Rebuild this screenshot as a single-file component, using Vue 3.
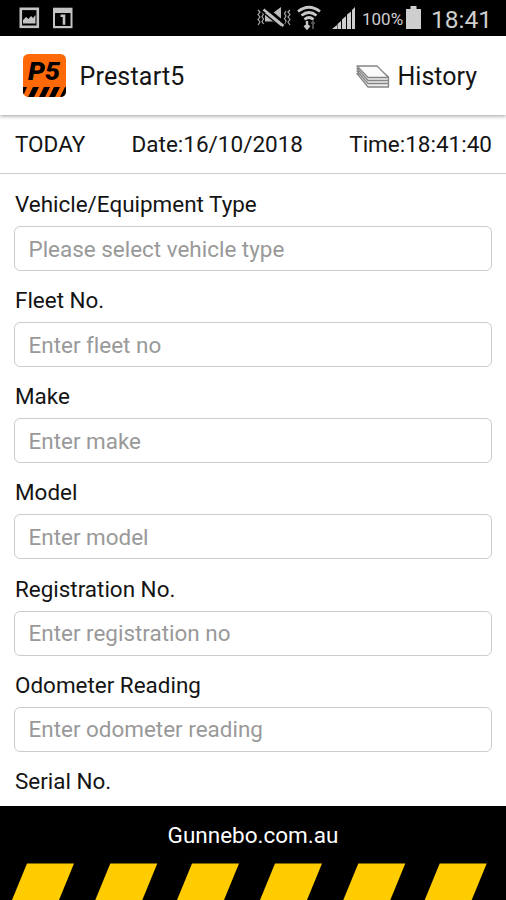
<script setup>
const fields = [
  { label: 'Vehicle/Equipment Type', hint: 'Please select vehicle type', id: 'type' },
  { label: 'Fleet No.', hint: 'Enter fleet no', id: 'fleet' },
  { label: 'Make', hint: 'Enter make', id: 'make' },
  { label: 'Model', hint: 'Enter model', id: 'model' },
  { label: 'Registration No.', hint: 'Enter registration no', id: 'rego' },
  { label: 'Odometer Reading', hint: 'Enter odometer reading', id: 'odo' },
]
const stripes = [27, 110.3, 192, 275, 358.3, 439.7]
</script>

<template>
  <div class="screen">
    <div class="status">
      <svg class="notices" width="54" height="22" viewBox="0 0 54 22">
        <rect x="1.8" y="1.8" width="17" height="18" fill="none" stroke="#c4c4c4" stroke-width="2.6" />
        <path d="M4 16.500V13l3-3 2.500 2 2.500-3 2 2 2.500-3v8.500z" fill="#c4c4c4" />
        <path d="M34 .7h19.500v20.500H34z" fill="#c4c4c4" />
        <path d="M36 6h15.500v13H36z" fill="#000" />
        <path d="M41.500 8.800h3.500v9" fill="none" stroke="#c4c4c4" stroke-width="2.600" />
      </svg>
      <div class="status-right">
        <svg class="mute" width="34" height="22" viewBox="0 0 34 22" fill="none" stroke="#a8a8a8">
          <path d="M1 3l2 2-2 2.500 2 2.500-2 2.500L3 15l-2 3M5 5l1.500 2L5 9.500 6.500 12 5 14.500 6.500 17M29 4l-1.500 2.500L29 9l-1.500 2.500L29 14l-1.500 3M33 3l-2 2 2 2.500-2 2.500 2 2.500-2 2.500 2 3" stroke-width="1.200" />
          <path d="M8 6h8l8-6v19.500l-8-5H8z" fill="#bcbcbc" stroke="none" />
          <path d="M9 1l18.500 15.500" stroke="#000" stroke-width="3" />
          <path d="M6.500 2.500l20 16.500" stroke="#c0c0c0" stroke-width="2.600" />
          <path d="M5 4.500l20 16.500" stroke="#000" stroke-width="1.400" />
        </svg>
        <svg class="wifi" width="24" height="26" viewBox="0 0 24 26" fill="none" stroke="#c8c8c8">
          <path d="M1 6.500Q12-2 23 6.500M4.500 10.500Q12 4.500 19.500 10.500M7.500 14.500q4.500-4 9 0" stroke-width="2.8" />
          <path d="M10 16v7M7.500 20.500l2.500 3 2.500-3" stroke-width="2.400" />
          <path d="M16 24v-7M14.500 19l1.500-2.500 1.500 2.500" stroke="#555" stroke-width="1.8" />
        </svg>
        <svg class="signal" width="24" height="23" viewBox="0 0 24 23" fill="#cecece">
          <path d="M0 22l5-4v4zM5.500 17l3.500-3v8H5.500zM10 12.500l4-3.500v13h-4zM15 7.500l4-3V22h-4zM20 3l3-3v22h-3z" />
        </svg>
        <span class="percent">100%</span>
        <svg class="battery" width="15" height="23" viewBox="0 0 15 23" fill="#cecece">
          <path d="M4.500 0h6v3H15v20H0V3h4.500z" />
        </svg>
        <span class="clock">18:41</span>
      </div>
    </div>

    <header class="header">
      <svg class="logo" width="43" height="43" viewBox="0 0 43 43">
        <clipPath id="logo-shape"><rect width="43" height="43" rx="5.500" /></clipPath>
        <g clip-path="url(#logo-shape)">
          <rect width="43" height="43" fill="#ff6908" />
          <text x="5" y="26" textLength="32" lengthAdjust="spacingAndGlyphs">P5</text>
          <path d="M0 33h4L1 40H0zM10 33h6L11 43H5zM21 33h6l-5 10h-6zM31 33h6l-5 10h-6zM42 33h1v10h-6z" fill="#000" />
        </g>
      </svg>
      <span class="brand">Prestart5</span>
      <div class="history">
        <svg width="34" height="23" viewBox="0 0 34 23" stroke="#858585" stroke-width="1.300" stroke-linejoin="round">
          <path d="M1 8.500l11 13.500h20.500V19L22 8.500z" fill="#eee" />
          <path d="M1 6l11 12.500h20.500V15.500L22 6z" fill="#eee" />
          <path d="M1 3.500L12 15.500h20.500V12L22 3.500z" fill="#eee" />
          <path d="M1 1L12 12.500h20.500L21 1z" fill="#fafafa" />
        </svg>
        <span class="history-text">History</span>
      </div>
    </header>

    <div class="moment">
      <span class="today">TODAY</span>
      <span class="date">Date:16/10/2018</span>
      <span class="time">Time:18:41:40</span>
    </div>

    <main class="form">
      <div v-for="f in fields" :key="f.id" class="field">
        <label :for="f.id" class="label">{{ f.label }}</label>
        <input :id="f.id" class="input" type="text" :placeholder="f.hint" />
      </div>
      <div class="label">Serial No.</div>
    </main>

    <footer class="footer">
      <div class="site">Gunnebo.com.au</div>
      <svg class="hazard" width="506" height="37" viewBox="0 0 506 37">
        <path v-for="x in stripes" :key="x" :d="`M${x} .5h47l-15 36.500h-47z`" fill="#fc0" />
      </svg>
    </footer>
  </div>
</template>

<style>
body {
  margin: 0;
  background: #fff;
}
</style>

<style scoped>
.screen {
  width: 506px;
  height: 900px;
  display: flex;
  flex-direction: column;
  overflow: hidden;
  background: #fff;
  color: #141414;
  font-family: Roboto, "Liberation Sans", sans-serif;
  font-variant-ligatures: none;
}
.screen > * {
  box-sizing: border-box;
  flex-shrink: 0;
}
.status {
  height: 35.500px;
  background: #000;
  display: flex;
  justify-content: space-between;
  padding: 7px 13px 0 19px;
}
.status-right {
  display: flex;
  align-items: flex-start;
  color: #cecece;
}
.wifi {
  margin: -2px 0 0 6px;
}
.signal {
  margin-left: 11px;
}
.percent {
  font-size: 17px;
  line-height: 24px;
  width: 41px;
  margin-left: 6px;
}
.battery {
  margin: -1px 0 0 3px;
}
.clock {
  font-size: 24.500px;
  line-height: 26px;
  margin-left: 10px;
  width: 62px;
  white-space: nowrap;
}
.header {
  height: 79.500px;
  display: flex;
  align-items: center;
  padding: 1px 29px 0 23px;
  background: #fff;
  box-shadow: 0 1px 4px rgba(0, 0, 0, 0.4);
  z-index: 1;
}
.logo text {
  font: italic 900 25px Roboto, sans-serif;
  fill: #000;
}
.brand {
  margin-left: 13.500px;
  padding-top: 1px;
  font-size: 25px;
  letter-spacing: 0.2px;
}
.history {
  margin-left: auto;
  display: flex;
  align-items: center;
  gap: 7px;
  padding-top: 1px;
  font-size: 25px;
}
.moment {
  height: 59px;
  border-bottom: 1px solid #ccc;
  display: flex;
  justify-content: space-between;
  align-items: center;
  padding: 0 14px 0 15px;
  font-size: 22.500px;
}
.form {
  height: 631.500px;
  overflow: hidden;
  padding: 17px 14px 0;
}
.field {
  display: flex;
  flex-direction: column;
  height: 96.150px;
}
.label {
  font-size: 22.450px;
  line-height: 26px;
  height: 35px;
  padding-left: 1px;
}
.input {
  box-sizing: border-box;
  width: 100%;
  height: 45px;
  border: 1.500px solid #ccc;
  border-radius: 6px;
  padding: 0 13px 0 13.500px;
  background: #fff;
  font: 22.450px Roboto, sans-serif;
  font-variant-ligatures: none;
  outline: none;
}
.input::placeholder {
  color: #999;
  opacity: 1;
}
.footer {
  height: 94.500px;
  background: #000;
  color: #fff;
  display: flex;
  flex-direction: column;
}
.site {
  height: 57.500px;
  line-height: 58.500px;
  text-align: center;
  font-size: 22.500px;
}
.hazard {
  display: block;
}
</style>
